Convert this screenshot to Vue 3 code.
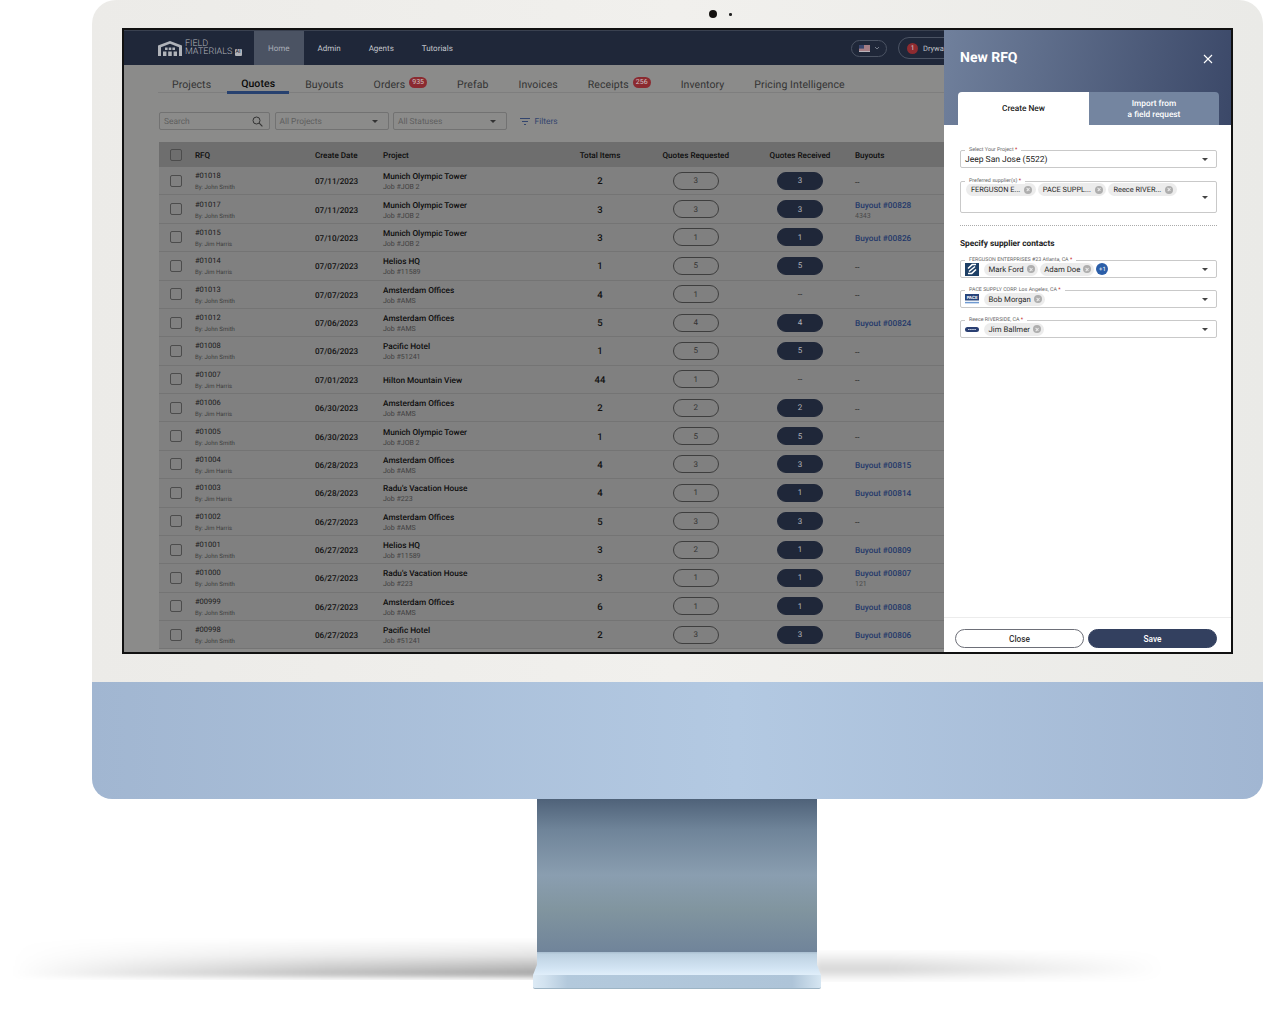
<script setup>
const navItems = [
  { label: 'Home', active: true },
  { label: 'Admin' },
  { label: 'Agents' },
  { label: 'Tutorials' }
]
const tabs = [
  { label: 'Projects' },
  { label: 'Quotes', active: true },
  { label: 'Buyouts' },
  { label: 'Orders', badge: '935' },
  { label: 'Prefab' },
  { label: 'Invoices' },
  { label: 'Receipts', badge: '256' },
  { label: 'Inventory' },
  { label: 'Pricing Intelligence' }
]
const J = 'John Smith'
const H = 'Jim Harris'
const M = ['Munich Olympic Tower', 'Job #JOB 2']
const A = ['Amsterdam Offices', 'Job #AMS']
const P = ['Pacific Hotel', 'Job #51241']
const HQ = ['Helios HQ', 'Job #11589']
const R = ["Radu's Vacation House", 'Job #223']
const rows = [
  ['#01018', J, '07/11/2023', M, 2, 3, 3, '', ''],
  ['#01017', J, '07/11/2023', M, 3, 3, 3, 'Buyout #00828', '4343'],
  ['#01015', H, '07/10/2023', M, 3, 1, 1, 'Buyout #00826', ''],
  ['#01014', H, '07/07/2023', HQ, 1, 5, 5, '', ''],
  ['#01013', J, '07/07/2023', A, 4, 1, 0, '', ''],
  ['#01012', J, '07/06/2023', A, 5, 4, 4, 'Buyout #00824', ''],
  ['#01008', J, '07/06/2023', P, 1, 5, 5, '', ''],
  ['#01007', H, '07/01/2023', ['Hilton Mountain View', ''], 44, 1, 0, '', ''],
  ['#01006', H, '06/30/2023', A, 2, 2, 2, '', ''],
  ['#01005', J, '06/30/2023', M, 1, 5, 5, '', ''],
  ['#01004', H, '06/28/2023', A, 4, 3, 3, 'Buyout #00815', ''],
  ['#01003', H, '06/28/2023', R, 4, 1, 1, 'Buyout #00814', ''],
  ['#01002', H, '06/27/2023', A, 5, 3, 3, '', ''],
  ['#01001', J, '06/27/2023', HQ, 3, 2, 1, 'Buyout #00809', ''],
  ['#01000', J, '06/27/2023', R, 3, 1, 1, 'Buyout #00807', '121'],
  ['#00999', J, '06/27/2023', A, 6, 1, 1, 'Buyout #00808', ''],
  ['#00998', J, '06/27/2023', P, 2, 3, 3, 'Buyout #00806', '']
].map(r => ({ id: r[0], by: r[1], date: r[2], project: r[3][0], job: r[3][1], total: r[4], req: r[5], rec: r[6], buyout: r[7], note: r[8] }))
const suppliers = ['FERGUSON E...', 'PACE SUPPL...', 'Reece RIVER...']
const contacts = [
  { label: 'FERGUSON ENTERPRISES #23 Atlanta, CA', logo: 'ferguson', people: ['Mark Ford', 'Adam Doe'], more: '+1' },
  { label: 'PACE SUPPLY CORP. Los Angeles, CA', logo: 'pace', people: ['Bob Morgan'] },
  { label: 'Reece RIVERSIDE, CA', logo: 'reece', people: ['Jim Ballmer'] }
]
</script>

<template>
  <div class="stage">
    <div class="shadow shadow-left"></div>
    <div class="shadow shadow-right"></div>
    <div class="monitor">
      <div class="bezel">
        <span class="cam"></span>
        <span class="cam-dot"></span>
        <div class="screen">
          <div class="app">
            <header class="nav">
              <div class="logo">
                <svg width="24" height="15" viewBox="0 0 24 15" class="logo-mark">
                  <path d="M0 4.5 12 0l12 4.5V15h-3V6.2L12 2.8 3 6.2V15H0z" fill="#b0b3b9"/>
                  <path d="M7 6.5h2.6v2.6H7zM10.7 6.5h2.6v2.6h-2.6zM14.4 6.5H17v2.6h-2.6zM5 10.6h3.4V15H5zM10.2 10.6h3.6V15h-3.6zM15.6 10.6H19V15h-3.4z" fill="#b0b3b9"/>
                </svg>
                <div class="logo-text">
                  <div>FIELD</div>
                  <div>MATERIALS <b class="ai">AI</b></div>
                </div>
              </div>
              <a v-for="n in navItems" :key="n.label" class="nav-item" :class="{ active: n.active }">{{ n.label }}</a>
              <div class="nav-right">
                <div class="flag-pill">
                  <svg width="11" height="7" viewBox="0 0 11 7">
                    <rect width="11" height="7" fill="#b9b4bb"/>
                    <path d="M0 1h11M0 3h11M0 5h11" stroke="#8b3a44" stroke-width=".9"/>
                    <rect width="5" height="3.6" fill="#39466e"/>
                  </svg>
                  <svg width="6" height="4" viewBox="0 0 6 4"><path d="M1 1l2 2 2-2" fill="none" stroke="#9aa0ac" stroke-width=".7"/></svg>
                </div>
                <div class="org-pill"><span class="org-num">1</span><span>Drywall</span></div>
              </div>
            </header>
            <nav class="tabs">
              <a v-for="t in tabs" :key="t.label" class="tab" :class="{ active: t.active }">
                {{ t.label }}<span v-if="t.badge" class="tab-badge">{{ t.badge }}</span>
              </a>
            </nav>
            <div class="filters">
              <div class="input search">
                <span>Search</span>
                <svg width="11" height="11" viewBox="0 0 11 11"><circle cx="4.5" cy="4.5" r="3.5" fill="none" stroke="#333" stroke-width="1"/><path d="M7.2 7.2 10.4 10.4" stroke="#333" stroke-width="1.1"/></svg>
              </div>
              <div class="input select"><span>All Projects</span><i class="caret"></i></div>
              <div class="input select"><span>All Statuses</span><i class="caret"></i></div>
              <div class="filter-link">
                <svg width="10" height="7" viewBox="0 0 10 7"><path d="M0 .5h10M2 3.5h6M4 6.5h2" stroke="#33456e" stroke-width="1"/></svg>
                <span>Filters</span>
              </div>
            </div>
            <div class="table">
              <div class="row head">
                <div class="c-check"><span class="box"></span></div>
                <div>RFQ</div>
                <div>Create Date</div>
                <div>Project</div>
                <div class="center">Total Items</div>
                <div class="center">Quotes Requested</div>
                <div class="center">Quotes Received</div>
                <div class="c-buy">Buyouts</div>
              </div>
              <div v-for="r in rows" :key="r.id" class="row body">
                <div class="c-check"><span class="box"></span></div>
                <div class="rfq"><div class="rfq-id">{{ r.id }}</div><div class="rfq-by">By: {{ r.by }}</div></div>
                <div class="date">{{ r.date }}</div>
                <div class="proj"><div class="proj-name">{{ r.project }}</div><div v-if="r.job" class="proj-job">{{ r.job }}</div></div>
                <div class="center total">{{ r.total }}</div>
                <div class="center"><span class="pill">{{ r.req }}</span></div>
                <div class="center">
                  <span v-if="r.rec" class="pill filled">{{ r.rec }}</span>
                  <span v-else class="dash">--</span>
                </div>
                <div class="c-buy">
                  <template v-if="r.buyout">
                    <div class="buy-link">{{ r.buyout }}</div>
                    <div v-if="r.note" class="buy-note">{{ r.note }}</div>
                  </template>
                  <span v-else class="dash">--</span>
                </div>
              </div>
            </div>
          </div>

          <aside class="modal">
            <div class="modal-head">
              <div class="modal-title">
                <h2>New RFQ</h2>
                <svg width="10" height="10" viewBox="0 0 10 10"><path d="M1 1l8 8M9 1l-8 8" stroke="#fff" stroke-width="1.1"/></svg>
              </div>
              <div class="modal-tabs">
                <div class="mt on">Create New</div>
                <div class="mt">Import from<br>a field request</div>
              </div>
            </div>
            <div class="modal-body">
              <div class="field single">
                <label>Select Your Project <em>*</em></label>
                <span class="value">Jeep San Jose (5522)</span>
                <i class="caret dark"></i>
              </div>
              <div class="field multi">
                <label>Preferred supplier(s) <em>*</em></label>
                <div class="chips">
                  <span v-for="s in suppliers" :key="s" class="chip">{{ s }}<i class="x"></i></span>
                </div>
                <i class="caret dark"></i>
              </div>
              <div class="dots"></div>
              <h3>Specify supplier contacts</h3>
              <div class="contacts">
                <div v-for="c in contacts" :key="c.label" class="field contact">
                  <label>{{ c.label }} <em>*</em></label>
                  <span class="sup-logo">
                    <svg v-if="c.logo === 'ferguson'" width="14" height="14" viewBox="0 0 14 14">
                      <rect width="14" height="14" fill="#1d3f66"/>
                      <path d="M3 6.5 7.2 2.6H11M3 11.4h3.8L11 7.5M4 9.5l6-5" fill="none" stroke="#fff" stroke-width="1.5"/>
                    </svg>
                    <svg v-else-if="c.logo === 'pace'" width="14" height="10" viewBox="0 0 14 10">
                      <rect width="14" height="6.5" fill="#27447c"/>
                      <text x="7" y="5" text-anchor="middle" font-size="4.4" font-weight="700" fill="#fff" font-family="Roboto, sans-serif">PACE</text>
                      <path d="M0 8.6h14" stroke="#6f9ad2" stroke-width="1.5"/>
                    </svg>
                    <svg v-else width="14" height="5" viewBox="0 0 14 5">
                      <rect width="14" height="5" rx="2.5" fill="#2a3f72"/>
                      <path d="M3 2.5h8" stroke="#c9d3e6" stroke-width="1" stroke-dasharray="1.6 .5"/>
                    </svg>
                  </span>
                  <div class="chips">
                    <span v-for="p in c.people" :key="p" class="chip">{{ p }}<i class="x"></i></span>
                    <span v-if="c.more" class="more">{{ c.more }}</span>
                  </div>
                  <i class="caret dark"></i>
                </div>
              </div>
            </div>
            <div class="modal-foot">
              <button class="btn">Close</button>
              <button class="btn primary">Save</button>
            </div>
          </aside>
        </div>
      </div>
      <div class="chin"></div>
      <div class="stand"></div>
      <div class="foot-top"></div>
      <div class="foot-base"></div>
    </div>
  </div>
</template>

<style>
html, body { margin: 0; background: #fff; }
</style>

<style scoped>
.stage { position: relative; width: 1264px; height: 1017px; overflow: hidden; background: #fff; font-family: Roboto, "Liberation Sans", sans-serif; text-rendering: geometricPrecision; }
.shadow { position: absolute; filter: blur(2px); }
.shadow-left { left: 0; width: 540px; top: 938px; height: 42px; background: linear-gradient(180deg, rgba(0,0,0,0), rgba(0,0,0,.1) 40%, rgba(0,0,0,.36) 86%, rgba(0,0,0,.1) 96%, rgba(0,0,0,0)); -webkit-mask-image: linear-gradient(90deg, transparent 2%, rgba(0,0,0,.3) 25%, rgba(0,0,0,.7) 60%, #000); mask-image: linear-gradient(90deg, transparent 2%, rgba(0,0,0,.3) 25%, rgba(0,0,0,.7) 60%, #000); }
.shadow-right { left: 815px; width: 350px; top: 950px; height: 32px; filter: blur(3px); background: linear-gradient(180deg, rgba(0,0,0,0), rgba(0,0,0,.17) 62%, rgba(0,0,0,.06) 85%, rgba(0,0,0,0)); -webkit-mask-image: linear-gradient(90deg, #000 20%, transparent); mask-image: linear-gradient(90deg, #000 20%, transparent); }
.monitor { position: relative; margin-left: 92px; width: 1171px; display: flex; flex-direction: column; }
.bezel { position: relative; box-sizing: border-box; height: 682px; padding: 28px 30px; background: linear-gradient(90deg, #ecebe8, #f1f0ed 50%, #eaeae7); border-radius: 24px 24px 0 0; }
.cam { position: absolute; left: 617px; top: 10px; width: 8px; height: 8px; border-radius: 50%; background: #14110f; }
.cam-dot { position: absolute; left: 637px; top: 13px; width: 2.5px; height: 2.5px; border-radius: 50%; background: #222; }
.screen { position: relative; box-sizing: border-box; width: 1111px; height: 626px; border: 2px solid #111; overflow: hidden; background: #8b8b8a; }
.chin { height: 117px; background: linear-gradient(90deg, #a1b6d1, #b3c9e2 55%, #a1b6d2); border-radius: 0 0 20px 20px; }
.stand { width: 280px; height: 153px; margin-left: 445px; background: linear-gradient(180deg, #4f6279 0, #6f8499 20%, #8a9eb0 50%, #81959f 72%, #70849a 100%); }
.foot-top { position: relative; width: 288px; height: 23px; margin-left: 441px; background: linear-gradient(180deg, #a9bed0 0, #bcd0e0 10%, #c4d7e7 30%, #d2e4f3 70%, #e0eefa 100%); clip-path: polygon(4px 0, 284px 0, 284px 55%, 288px 100%, 0 100%, 4px 55%); }
.foot-base { position: relative; width: 288px; height: 14px; margin-left: 441px; box-sizing: border-box; background: linear-gradient(90deg, #dceaf5, #d2e2ef 4%, #b3c9dc 12%, #aec4d8 90%, #d6e6f2); border-radius: 0 0 2px 2px; border-bottom: 1px solid #9db4c4; }

.app { width: 100%; color: #111; }
.nav { position: relative; height: 35px; display: flex; align-items: stretch; background: #1f2739; border-top: 1px solid #3a4150; box-sizing: border-box; }
.logo { display: flex; align-items: center; gap: 3px; margin-left: 34px; width: 96px; }
.logo-text { font-size: 9px; line-height: 8px; font-weight: 300; color: #b3b6bc; }
.ai { display: inline-block; font-size: 5.5px; line-height: 7px; padding: 0 1px; background: #b0b3b9; color: #1f2739; border-radius: 1px; vertical-align: 1px; }
.nav-item { display: flex; align-items: center; padding: 1px 14px 0; font-size: 8px; color: #c2c5cb; }
.nav-item.active { background: #4b5363; color: #a9adb6; }
.nav-right { position: absolute; left: 727px; top: 6px; width: 93px; height: 22px; display: flex; align-items: center; gap: 11px; overflow: hidden; white-space: nowrap; }
.flag-pill { flex: none; width: 36px; height: 17px; box-sizing: border-box; border: 1px solid #4b5363; border-radius: 9px; display: flex; align-items: center; justify-content: center; gap: 4px; }
.org-pill { flex: none; width: 110px; height: 22px; box-sizing: border-box; border: 1px solid #4b5363; border-radius: 11px; display: flex; align-items: center; gap: 5px; padding: 0 8px; font-size: 7.5px; color: #bfc2c8; white-space: nowrap; }
.org-num { width: 11px; height: 11px; border-radius: 50%; background: #8e2b30; color: #ddd; font-size: 6.5px; display: flex; align-items: center; justify-content: center; }

.tabs { display: flex; gap: 2px; margin: 0 0 0 34px; height: 28px; border-bottom: 1px solid #7e7e7e; box-sizing: border-box; }
.tab { position: relative; display: flex; align-items: center; padding: 11px 14px 0; font-size: 10.5px; letter-spacing: .08px; color: #333; white-space: nowrap; }
.tab.active { color: #0c0c0c; font-weight: 500; border-bottom: 3px solid #27416f; margin-bottom: -2px; padding-top: 10px; }
.tab-badge { margin-left: 4px; margin-top: -3px; height: 11px; padding: 0 3px; border-radius: 5.5px; background: #8b2a30; color: #cfc6c6; font-size: 7px; line-height: 11px; letter-spacing: 0; }

.filters { display: flex; align-items: center; gap: 4.5px; margin: 18px 0 0 35px; height: 19px; }
.input { box-sizing: border-box; height: 18px; border: 1px solid #727272; border-radius: 2px; display: flex; align-items: center; justify-content: space-between; padding: 2px 6px 0 4px; font-size: 8.4px; color: #5e5e5e; }
.search { width: 111px; }
.select { width: 114px; }
.caret { display: block; width: 0; height: 0; border-left: 3px solid transparent; border-right: 3px solid transparent; border-top: 3px solid #333; margin-right: 4px; }
.filter-link { display: flex; align-items: center; gap: 5px; margin-left: 8px; padding-top: 2px; font-size: 8.4px; color: #33456e; }

.table { margin: 12px 0 0 35px; width: 830px; }
.row { display: grid; grid-template-columns: 36px 120px 68px 179.5px 75px 116.5px 92px 143px; align-items: center; height: 28.375px; box-sizing: border-box; background: #808080; border-bottom: 1px solid #747474; font-size: 8px; }
.row.head { height: 25px; background: #6e6e6e; border-bottom: 0; font-weight: 500; color: #0c0c0c; font-size: 8.1px; }
.c-check { display: flex; justify-content: center; padding-right: 3px; }
.box { display: block; width: 12px; height: 12px; box-sizing: border-box; border: 1px solid #4c4c4c; border-radius: 2px; }
.center { display: flex; justify-content: center; }
.c-buy { padding-left: 9px; }
.body .c-buy { padding-top: 3px; }
.rfq { padding-top: 3px; }
.rfq-id { font-size: 7.5px; line-height: 9px; color: #1a1a1a; margin-top: -1px; }
.rfq-by { font-size: 6px; line-height: 8px; margin-top: 4px; color: #3d3d3d; }
.date { padding-top: 1px; font-size: 8.1px; font-weight: 500; color: #111; }
.proj { padding-top: 3px; }
.proj-name { font-size: 8.25px; line-height: 10px; font-weight: 500; color: #0c0c0c; }
.proj-job { font-size: 7px; line-height: 9px; margin-top: 1px; color: #3f3f3f; }
.total { padding-top: 2px; font-size: 9.5px; font-weight: 500; color: #111; }
.pill { display: flex; align-items: center; justify-content: center; width: 46px; height: 18px; box-sizing: border-box; border: 1px solid #3e3e3e; border-radius: 9px; font-size: 8px; color: #333; }
.pill.filled { background: #1f2739; border-color: #1f2739; color: #b0b3ba; }
.dash { font-size: 8px; color: #1a1a1a; }
.buy-link { font-size: 8.25px; line-height: 10px; color: #23386a; font-weight: 500; }
.buy-note { font-size: 7px; line-height: 9px; margin-top: 1px; color: #4a4a4a; }

.modal { position: absolute; top: 0; right: 0; width: 287px; height: 100%; display: flex; flex-direction: column; background: #fff; }
.modal-head { height: 95px; box-sizing: border-box; padding: 0 14px; display: flex; flex-direction: column; justify-content: flex-end; background: linear-gradient(100deg, #70809c, #3b4868); }
.modal-title { display: flex; justify-content: space-between; align-items: center; padding: 0 4px 0 2px; margin-bottom: 25px; }
.modal-title h2 { margin: 0 0 1px; font-size: 14px; line-height: 16px; font-weight: 700; color: #fff; }
.modal-tabs { display: grid; grid-template-columns: 131px 130px; height: 33px; }
.mt { display: flex; align-items: center; justify-content: center; text-align: center; padding-top: 2px; box-sizing: border-box; font-size: 8.3px; line-height: 10.5px; font-weight: 500; background: #7485a0; color: #fff; border-radius: 0 4px 0 0; }
.mt.on { background: #fff; color: #222; border-radius: 4px 0 0 0; }
.modal-body { flex: 1; padding: 25px 14px 0 16px; }
.field { position: relative; box-sizing: border-box; border: 1px solid #c9c9c9; border-radius: 2px; display: flex; font-size: 8.5px; color: #222; }
.field label { position: absolute; left: 4px; top: -4.5px; padding: 0 4px; background: #fff; font-size: 5.3px; line-height: 6px; color: #666; white-space: nowrap; }
.field em { color: #c01818; font-style: normal; }
.field .caret { position: absolute; right: 8px; top: 50%; margin: -1px 0 0; }
.caret.dark { border-top-color: #444; border-left-width: 3.5px; border-right-width: 3.5px; border-top-width: 3.5px; }
.single { height: 18px; align-items: center; padding: 2px 0 0 4px; }
.value { font-size: 8.5px; }
.multi { height: 32px; margin-top: 13px; padding: 1px 0 0 5px; }
.multi .chip { font-size: 7.4px; padding: 0 3.5px 0 5px; gap: 4px; }
.chips { display: flex; align-items: center; gap: 2px; height: 13px; }
.chip { display: flex; align-items: center; gap: 3px; height: 13px; box-sizing: border-box; padding: 0 3px 0 4.5px; border-radius: 7px; background: #ececec; font-size: 7.8px; color: #2a2a2a; white-space: nowrap; }
.x { position: relative; display: block; width: 8px; height: 8px; border-radius: 50%; background: #aeaeae; }
.x::before, .x::after { content: ""; position: absolute; left: 1.8px; top: 3.6px; width: 4.4px; height: .8px; background: #ececec; transform: rotate(45deg); }
.x::after { transform: rotate(-45deg); }
.dots { margin-top: 12px; border-top: 1px dotted #aaa; }
.modal-body h3 { margin: 13px 0 0; font-size: 8.3px; line-height: 10px; font-weight: 700; color: #222; }
.contacts { display: flex; flex-direction: column; gap: 12px; margin-top: 11px; }
.contact { height: 18px; align-items: center; padding-left: 4px; gap: 5px; }
.sup-logo { width: 14px; display: flex; align-items: center; justify-content: center; }
.more { width: 12px; height: 12px; margin-left: 0; border-radius: 50%; background: #2b5ea8; color: #fff; font-size: 6px; display: flex; align-items: center; justify-content: center; }
.modal-foot { height: 35px; box-sizing: border-box; border-top: 1px solid #ececec; display: grid; grid-template-columns: 129px 129px; gap: 4px; padding: 11px 0 0 11px; }
.btn { height: 19px; padding: 0; border-radius: 10px; border: 1px solid #6d6f78; background: #fff; color: #333; font: 500 8.3px Roboto, sans-serif; }
.btn.primary { background: #33405f; border-color: #33405f; color: #fff; }
</style>
